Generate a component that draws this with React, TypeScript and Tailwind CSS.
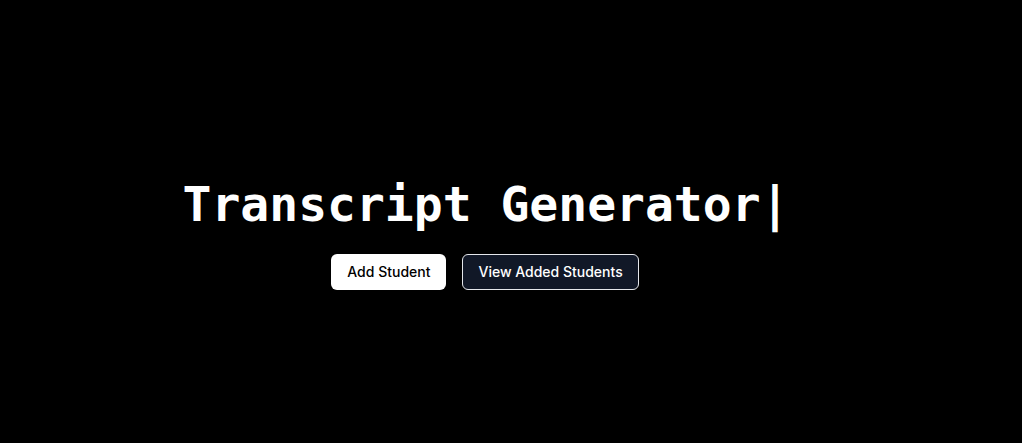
export default function App() {
  return (
    <div className="h-[443px] w-full bg-black overflow-hidden">
      <div className="flex flex-col items-center pt-[180px] pr-[50px]">
        <h1
          className="text-[48px] leading-[48px] font-bold text-white whitespace-pre"
          style={{ fontFamily: '"DejaVu Sans Mono", "Liberation Mono", monospace' }}
        >
          Transcript Generator|
        </h1>
        <div className="mt-[26px] flex gap-4 pr-[2px]" style={{ fontFamily: 'Inter, "Noto Sans", sans-serif' }}>
          <button className="h-9 px-4 rounded-md bg-white text-black text-sm font-medium">
            Add Student
          </button>
          <button className="h-9 px-[15px] rounded-md bg-[#111827] border border-gray-200 text-white text-sm font-medium">
            View Added Students
          </button>
        </div>
      </div>
    </div>
  )
}
